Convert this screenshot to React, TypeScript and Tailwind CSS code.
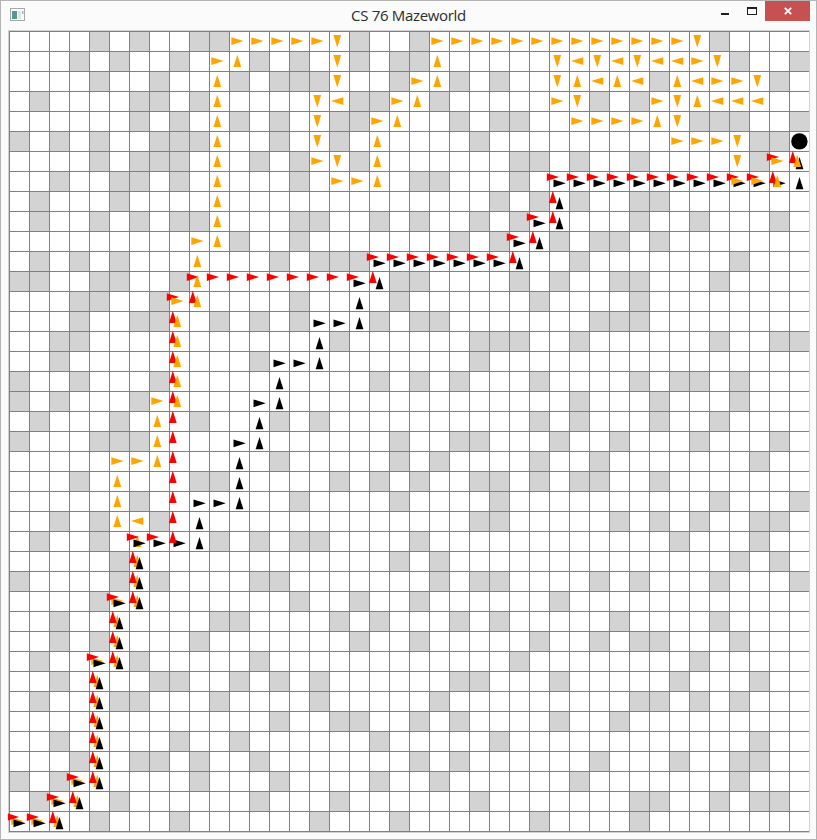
import React from 'react';

const COLS = 40;
const CELL = 20;

const walls: number[][] = [
  [4, 6, 9, 10, 17, 20, 35],
  [3, 5, 8, 12, 14, 17, 19, 20, 36, 39],
  [4, 7, 11, 13, 14, 15, 19, 22, 24, 32, 38],
  [1, 6, 7, 9, 17, 18, 21, 29, 31],
  [6, 8, 11, 13, 16, 17, 22, 24, 25, 34, 35, 36, 39],
  [0, 2, 4, 7, 8, 9, 13, 16, 23, 37, 38],
  [4, 6, 7, 8, 12, 14, 17, 25, 26, 28, 31, 37],
  [2, 5, 6, 8, 14, 20, 21, 25],
  [1, 5, 24, 26, 28, 31, 32],
  [1, 4, 6, 8, 9, 14, 15, 18, 20, 23, 25, 31, 34, 38],
  [11, 14, 22, 24, 27, 29, 30, 32],
  [1, 3, 5, 13, 15, 16, 17, 28, 36],
  [0, 1, 4, 5, 8, 19, 20, 25, 27, 30, 31, 35],
  [3, 4, 7, 14, 19, 26, 31],
  [3, 6, 7, 10, 12, 14, 18, 20, 21, 29, 30, 31],
  [2, 3, 16, 23, 24, 25, 28, 35, 38, 39],
  [2, 12, 23],
  [0, 3, 7, 18, 20, 22, 26, 31, 33, 34, 36],
  [0, 2, 6, 28, 32, 36],
  [1, 5, 9, 13, 15, 26, 28, 32, 35],
  [0, 4, 5, 6, 19, 22, 23, 27, 30, 34, 38],
  [13, 19, 21, 26, 29, 37],
  [3, 9, 10, 16, 18, 20, 23, 24, 26, 28, 29, 32],
  [6, 14, 19, 24, 35, 39],
  [2, 4, 7, 23, 24, 30, 32, 34, 37, 38],
  [1, 4, 10, 12, 14, 15, 20, 33, 37],
  [5, 19, 21, 36, 38],
  [0, 5, 7, 12, 13, 21, 23, 24, 29, 31, 35, 39],
  [4, 14, 17, 20, 27],
  [2, 10, 11, 16, 18, 22, 24, 30, 35],
  [2, 4, 9, 17, 20, 26, 29, 31, 32, 36],
  [1, 6, 12, 25, 34],
  [2, 7, 8, 11, 13, 15, 22, 23, 27, 33, 37],
  [1, 5, 6, 10, 15, 21, 31, 32, 34, 36],
  [13, 16, 17, 20, 22, 27, 30],
  [2, 8, 11, 18, 24, 37],
  [3, 6, 7, 9, 12, 20, 22, 29, 33, 36, 37],
  [0, 2, 9, 13, 18, 21, 28, 36],
  [1, 5, 12, 16, 23, 31, 32, 35, 37, 38],
  [4, 8, 15, 19, 26, 31],
];

type Robot = { color: string; dx: number; dy: number; moves: string };

const SHARED = 'RRURURUUUUUURUUURUUU';

const robots: Robot[] = [
  {
    color: '#ffa500',
    dx: 8.3,
    dy: 10.1,
    moves:
      SHARED +
      'ULUUURRUUURUUUUURUUURUUUUUUUUURU' +
      'RRRRRDDDLDDDRDRRUUURURURUU' +
      'RRRRRRRRRRRRRDRDRRDLLLULULLDLULDLULDDRDRRRRURDDRRRDDRRURU',
  },
  {
    color: '#000000',
    dx: 10.5,
    dy: 12.3,
    moves: SHARED + 'RRRUURRUUURUURUURRUURRUURURRRRRRRURURUURRRRRRRRRRRRUU',
  },
  {
    color: '#ff0000',
    dx: 3.8,
    dy: 6.1,
    moves: SHARED + 'RRUUUUUUUUUUUURURRRRRRRRRURRRRRRRURURUURRRRRRRRRRRURU',
  },
];

const angles: Record<string, number> = { R: 0, D: 90, L: 180, U: 270 };
const steps: Record<string, [number, number]> = { R: [1, 0], D: [0, 1], L: [-1, 0], U: [0, -1] };

type Arrow = { x: number; y: number; angle: number; color: string; time: number };

function trace({ color, dx, dy, moves }: Robot): Arrow[] {
  let col = 0;
  let row = 39;
  return moves.split('').map((move, time) => {
    const arrow = { x: col * CELL + dx, y: row * CELL + dy, angle: angles[move], color, time };
    col += steps[move][0];
    row += steps[move][1];
    return arrow;
  });
}

const arrows = robots.flatMap(trace).sort((a, b) => a.time - b.time);

function TitleBar() {
  return (
    <header className="flex h-[29px] shrink-0 items-start">
      <div className="flex w-[180px] pt-[7px] pl-[9px]">
        <svg width="15" height="13" viewBox="0 0 15 13">
          <defs>
            <linearGradient id="pane" x1="0" y1="0" x2="0.4" y2="1">
              <stop offset="0" stopColor="#5d8fa8" />
              <stop offset="1" stopColor="#4f9a86" />
            </linearGradient>
          </defs>
          <rect x="0.5" y="0.5" width="14" height="12" fill="#fafafa" stroke="#a3a8a8" />
          <rect x="2" y="3" width="5" height="8" fill="url(#pane)" />
          <rect x="8" y="3" width="3" height="8" fill="#dce5e3" />
          <rect x="12" y="3" width="1.5" height="3" fill="#9fb3ae" />
        </svg>
      </div>
      <h1 className="flex-1 pt-[4px] text-center text-[15px] leading-[20px] tracking-[-0.32px] text-[#2b2b2b]">
        CS 76 Mazeworld
      </h1>
      <div className="flex w-[180px] justify-end pr-[6px]">
        <div className="flex w-[26px] pt-[12px]">
          <span className="h-[2px] w-[8px] bg-[#1e1e1e]" />
        </div>
        <div className="w-[18px] pt-[6px]">
          <div className="h-[8px] w-[10px] border border-t-2 border-[#1e1e1e]" />
        </div>
        <div className="flex h-[20px] w-[45px] items-center justify-center bg-[#c75050]">
          <svg width="8" height="8" viewBox="0 0 8 8">
            <path d="M0.8 0.8L7.2 7.2M7.2 0.8L0.8 7.2" stroke="#fff" strokeWidth="1.8" />
          </svg>
        </div>
      </div>
    </header>
  );
}

function Maze() {
  return (
    <main className="relative ml-[7px] h-[803px] w-[802px] shrink-0 border border-[#d2d2d2]">
      <div className="grid w-[800px] grid-cols-[repeat(40,20px)] border-b border-[#808080]">
        {walls.map((row, r) =>
          Array.from({ length: COLS }, (_, c) => (
            <div
              key={`${r}-${c}`}
              className={`h-[20px] border-t border-l border-[#808080] ${row.includes(c) ? 'bg-[#d3d3d3]' : 'bg-white'}`}
            />
          )),
        )}
      </div>
      <svg className="absolute top-0 -left-px" width="802" height="801" viewBox="-1 0 802 801">
        {arrows.map((a, i) => (
          <polygon
            key={i}
            points="-6,-3.9 6.3,0 -6,3.9"
            fill={a.color}
            transform={`translate(${a.x} ${a.y}) rotate(${a.angle})`}
          />
        ))}
        <circle cx="790.4" cy="110.4" r="8.2" fill="#000" />
      </svg>
    </main>
  );
}

export default function App() {
  return (
    <div className="flex h-[840px] w-[817px] flex-col overflow-hidden border border-[#b4b4b4] bg-[#fbfbfb] font-['Open_Sans','Noto_Sans',sans-serif]">
      <TitleBar />
      <Maze />
    </div>
  );
}
